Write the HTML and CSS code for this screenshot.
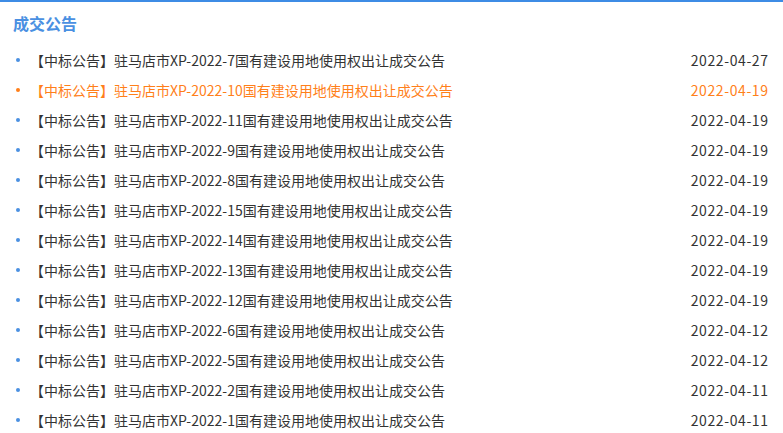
FILE: index.html
```html
<!DOCTYPE html>
<html lang="zh-CN">
<head>
    <meta charset="UTF-8">
    <meta name="viewport" content="width=device-width, initial-scale=1.0">
    <title>成交公告</title>
    <link rel="stylesheet" href="styles.css">
</head>
<body>
    <div class="panel">
        <h2 class="panel-title">成交公告</h2>
        <ul class="notice-list">
            <li class="notice-item"><a href="#">【中标公告】驻马店市XP-2022-7国有建设用地使用权出让成交公告</a><span class="date">2022-04-27</span></li>
            <li class="notice-item active"><a href="#">【中标公告】驻马店市XP-2022-10国有建设用地使用权出让成交公告</a><span class="date">2022-04-19</span></li>
            <li class="notice-item"><a href="#">【中标公告】驻马店市XP-2022-11国有建设用地使用权出让成交公告</a><span class="date">2022-04-19</span></li>
            <li class="notice-item"><a href="#">【中标公告】驻马店市XP-2022-9国有建设用地使用权出让成交公告</a><span class="date">2022-04-19</span></li>
            <li class="notice-item"><a href="#">【中标公告】驻马店市XP-2022-8国有建设用地使用权出让成交公告</a><span class="date">2022-04-19</span></li>
            <li class="notice-item"><a href="#">【中标公告】驻马店市XP-2022-15国有建设用地使用权出让成交公告</a><span class="date">2022-04-19</span></li>
            <li class="notice-item"><a href="#">【中标公告】驻马店市XP-2022-14国有建设用地使用权出让成交公告</a><span class="date">2022-04-19</span></li>
            <li class="notice-item"><a href="#">【中标公告】驻马店市XP-2022-13国有建设用地使用权出让成交公告</a><span class="date">2022-04-19</span></li>
            <li class="notice-item"><a href="#">【中标公告】驻马店市XP-2022-12国有建设用地使用权出让成交公告</a><span class="date">2022-04-19</span></li>
            <li class="notice-item"><a href="#">【中标公告】驻马店市XP-2022-6国有建设用地使用权出让成交公告</a><span class="date">2022-04-12</span></li>
            <li class="notice-item"><a href="#">【中标公告】驻马店市XP-2022-5国有建设用地使用权出让成交公告</a><span class="date">2022-04-12</span></li>
            <li class="notice-item"><a href="#">【中标公告】驻马店市XP-2022-2国有建设用地使用权出让成交公告</a><span class="date">2022-04-11</span></li>
            <li class="notice-item"><a href="#">【中标公告】驻马店市XP-2022-1国有建设用地使用权出让成交公告</a><span class="date">2022-04-11</span></li>
        </ul>
    </div>
</body>
</html>
```

FILE: styles.css
```css
body {
    margin: 0;
    font-family: "Noto Sans CJK SC", "Noto Sans", sans-serif;
    background-color: #fff;
    color: #333;
}
.panel {
    border-top: 2px solid #3d8ce5;
    padding: 0 15px 0 13px;
}
.panel-title {
    margin: 0;
    padding-top: 9px;
    height: 34px;
    font-size: 16px;
    font-weight: bold;
    line-height: 24px;
    color: #4a90e2;
}
.notice-list {
    list-style: none;
    margin: 0;
    padding: 0;
}
.notice-item {
    display: flex;
    justify-content: space-between;
    align-items: center;
    height: 30px;
    font-size: 14px;
    padding-left: 17px;
    position: relative;
}
.notice-item::before {
    content: "";
    position: absolute;
    left: 3px;
    top: 13px;
    width: 4px;
    height: 4px;
    border-radius: 50%;
    background-color: #4a90e2;
}
.notice-item a {
    color: #333;
    text-decoration: none;
}
.notice-item.active a,
.notice-item.active .date {
    color: #ff7f1a;
}
.notice-item.active::before {
    background-color: #ff7f1a;
}
.date {
    color: #333;
    letter-spacing: 0.6px;
    margin-right: -0.6px;
}
```
